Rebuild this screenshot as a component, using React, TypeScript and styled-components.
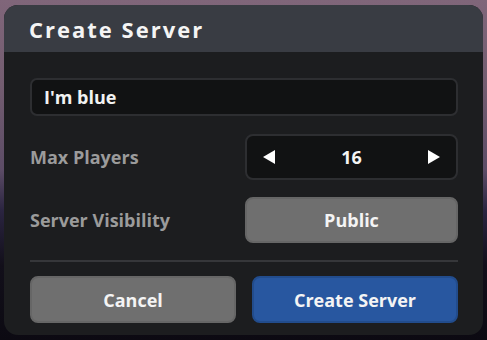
import React, { useState } from "react";
import styled, { createGlobalStyle } from "styled-components";

const GlobalStyle = createGlobalStyle`
  html, body {
    margin: 0;
    padding: 0;
  }
  body {
    width: 487px;
    height: 340px;
    overflow: hidden;
    font-family: "Open Sans", Roboto, sans-serif;
    background:
      linear-gradient(180deg, #80667a 0%, #735d70 25%, #5c4c66 50%, #2a2440 62%, #120f1a 78%, #0c0a12 100%);
  }
`;

export default function App() {
  const [name] = useState("I'm blue");
  const [players, setPlayers] = useState(16);

  return (
    <>
      <GlobalStyle />
      <Backdrop>
        <Dialog>
          <DialogHeader>
            <Title>Create Server</Title>
          </DialogHeader>
          <DialogBody>
            <NameInput value={name} readOnly />
            <Row>
              <Label>Max Players</Label>
              <Stepper>
                <Arrow onClick={() => setPlayers((p) => Math.max(1, p - 1))}>
                  <svg width="14" height="16" viewBox="0 0 14 16">
                    <path d="M13 1 L1 8 L13 15 Z" fill="#fff" />
                  </svg>
                </Arrow>
                <StepValue>{players}</StepValue>
                <Arrow onClick={() => setPlayers((p) => p + 1)}>
                  <svg width="14" height="16" viewBox="0 0 14 16">
                    <path d="M1 1 L13 8 L1 15 Z" fill="#fff" />
                  </svg>
                </Arrow>
              </Stepper>
            </Row>
            <Row>
              <Label>Server Visibility</Label>
              <Button $variant="gray">Public</Button>
            </Row>
            <Divider />
            <Actions>
              <Button $variant="gray">Cancel</Button>
              <Button $variant="blue">Create Server</Button>
            </Actions>
          </DialogBody>
        </Dialog>
      </Backdrop>
    </>
  );
}

const Backdrop = styled.div`
  padding: 5px 4px 0 4px;
`;

const Dialog = styled.div`
  width: 479px;
  height: 330px;
  border-radius: 14px;
  overflow: hidden;
  background: #1c1d1f;
  display: flex;
  flex-direction: column;
`;

const DialogHeader = styled.header`
  height: 47px;
  background: #393c43;
  display: flex;
  align-items: center;
  padding: 0 25px;
`;

const Title = styled.h1`
  margin: 0;
  color: #f4f4f4;
  font-size: 22px;
  font-weight: 700;
  letter-spacing: 2px;
`;

const DialogBody = styled.div`
  padding: 26px 25px 12px 26px;
  display: flex;
  flex-direction: column;
`;

const NameInput = styled.input`
  box-sizing: border-box;
  height: 38px;
  width: 100%;
  background: #111213;
  border: 2px solid #2d2e31;
  border-radius: 7px;
  color: #f2f2f2;
  font-family: inherit;
  font-size: 18px;
  font-weight: 700;
  padding: 0 12px;
  outline: none;
  margin-bottom: 18px;
`;

const Row = styled.div`
  display: grid;
  grid-template-columns: 215px 1fr;
  align-items: center;
  margin-bottom: 17px;
`;

const Label = styled.span`
  color: #9b9b9b;
  font-size: 18px;
  font-weight: 700;
`;

const Stepper = styled.div`
  box-sizing: border-box;
  height: 46px;
  background: #111213;
  border: 2px solid #2d2e31;
  border-radius: 8px;
  display: flex;
  align-items: center;
  justify-content: space-between;
  padding: 0 15px;
`;

const Arrow = styled.button`
  background: none;
  border: none;
  padding: 0;
  display: flex;
  cursor: pointer;
`;

const StepValue = styled.span`
  color: #f4f4f4;
  font-size: 18px;
  font-weight: 700;
`;

const Button = styled.button<{ $variant: "gray" | "blue" }>`
  box-sizing: border-box;
  height: 46px;
  width: 100%;
  border-radius: 8px;
  border: 2px solid ${(p) => (p.$variant === "blue" ? "#224c8c" : "#666666")};
  background: ${(p) => (p.$variant === "blue" ? "#2857a0" : "#6f6f6f")};
  color: #f4f4f4;
  font-family: inherit;
  font-size: 18px;
  font-weight: 700;
  cursor: pointer;
`;

const Divider = styled.hr`
  margin: 0 0 14px 0;
  border: none;
  height: 2px;
  background: #36373a;
`;

const Actions = styled.div`
  display: grid;
  grid-template-columns: 1fr 1fr;
  gap: 16px;

  & > button {
    height: 47px;
  }
`;
